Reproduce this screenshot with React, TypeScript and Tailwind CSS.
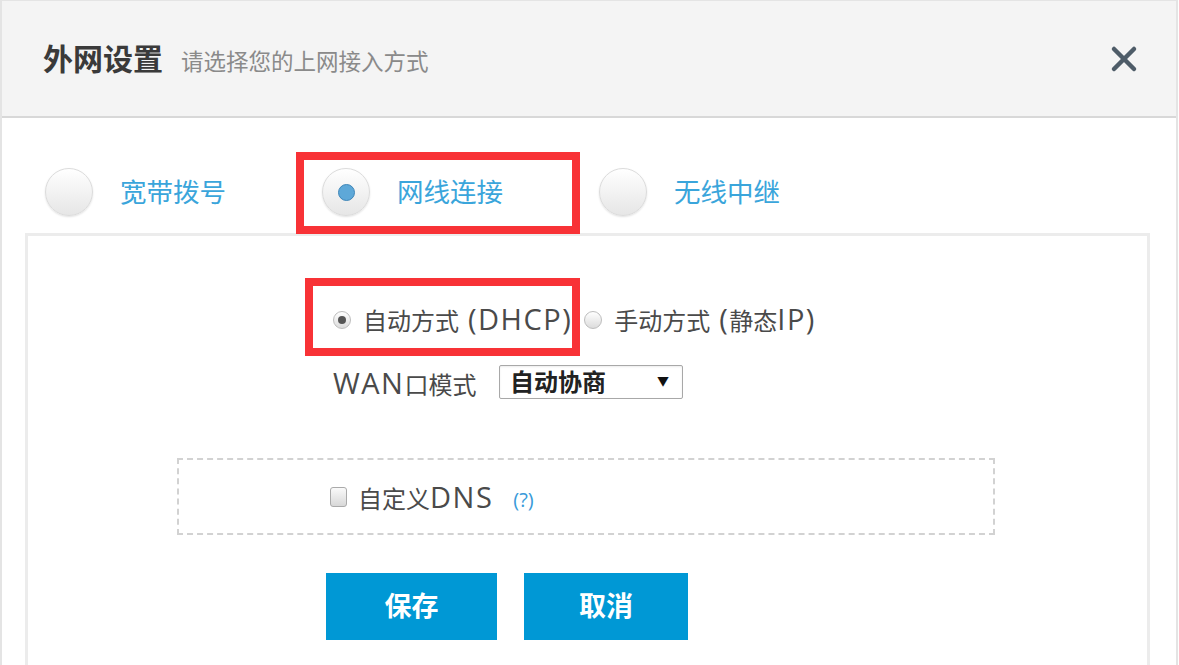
import React from "react";

function BigRadio({ checked }: { checked?: boolean }) {
  return (
    <div className="w-[48px] h-[48px] rounded-full border border-[#dcdcdc] bg-gradient-to-b from-white to-[#e6e6e6] shadow-[0_1px_2px_rgba(0,0,0,0.12)] flex items-center justify-center shrink-0">
      {checked && (
        <div className="w-[17px] h-[17px] rounded-full bg-[#5ea8d8] border border-[#3f86b8]" />
      )}
    </div>
  );
}

function SmallRadio({ checked }: { checked?: boolean }) {
  return (
    <div className="w-[18px] h-[18px] rounded-full border border-[#bdbdbd] bg-gradient-to-b from-white to-[#dcdcdc] flex items-center justify-center shrink-0">
      {checked && <div className="w-[8px] h-[8px] rounded-full bg-[#555]" />}
    </div>
  );
}

function L({ children }: { children: React.ReactNode }) {
  return <span className="text-[29px] tracking-[1.5px]">{children}</span>;
}

function Sp() {
  return <span className="inline-block w-[9px]" />;
}

export default function App() {
  return (
    <div className="w-[1179px] h-[665px] overflow-hidden bg-white relative font-['Open_Sans','Noto_Sans_CJK_SC',sans-serif]">
      <div className="w-[1178px] h-[665px] border-l-2 border-r-2 border-t border-[#e4e4e4] flex flex-col">
        {/* Header */}
        <div className="h-[117px] shrink-0 bg-[#f4f4f4] border-b-2 border-[#d8d8d8] flex items-center pl-[41px] pr-[38px]">
          <div className="flex items-baseline">
            <span className="text-[30px] font-bold text-[#3a3a3a] leading-none">外网设置</span>
            <span className="ml-[18px] text-[22.5px] text-[#8a8a8a] leading-none">请选择您的上网接入方式</span>
          </div>
          <div className="ml-auto">
            <svg width="28" height="28" viewBox="0 0 28 28">
              <line x1="4" y1="4" x2="24" y2="24" stroke="#4e5c68" strokeWidth="4.5" strokeLinecap="round" />
              <line x1="24" y1="4" x2="4" y2="24" stroke="#4e5c68" strokeWidth="4.5" strokeLinecap="round" />
            </svg>
          </div>
        </div>

        {/* Tabs */}
        <div className="flex items-center pl-[43px] pt-[50px] pb-[17px] shrink-0">
          <div className="flex items-center mr-[96px]">
            <BigRadio />
            <span className="ml-[27px] text-[26.5px] text-[#3aa5db] leading-none">宽带拨号</span>
          </div>
          <div className="flex items-center mr-[96px]">
            <BigRadio checked />
            <span className="ml-[27px] text-[26.5px] text-[#3aa5db] leading-none">网线连接</span>
          </div>
          <div className="flex items-center">
            <BigRadio />
            <span className="ml-[27px] text-[26.5px] text-[#3aa5db] leading-none">无线中继</span>
          </div>
        </div>

        {/* Panel */}
        <div className="ml-[23px] w-[1125px] flex-1 border-[3px] border-b-0 border-[#ececec] flex flex-col">
          <div className="flex items-center pl-[305px] pt-[66px] h-[101px] text-[24px] text-[#4a4a4a]">
            <SmallRadio checked />
            <span className="ml-[12px] leading-[33px] whitespace-nowrap">
              自动方式<Sp /><L>(DHCP)</L>
            </span>
            <div className="ml-[12px]">
              <SmallRadio />
            </div>
            <span className="ml-[12px] leading-[33px] whitespace-nowrap">
              手动方式<Sp /><L>(</L>静态<L>IP)</L>
            </span>
          </div>

          <div className="flex items-center pl-[305px] mt-[28px]">
            <span className="w-[166px] text-[24px] text-[#4a4a4a] leading-none whitespace-nowrap">
              <L>WAN</L>口模式
            </span>
            <div className="w-[184px] h-[34px] border border-[#a8a8a8] rounded-[2px] bg-white flex items-center pl-[10px] pr-[13px] shadow-[inset_0_1px_2px_rgba(0,0,0,0.08)]">
              <span className="text-[24px] font-bold text-[#222] leading-none">自动协商</span>
              <span className="ml-auto text-[12px] text-[#111] leading-none">▼</span>
            </div>
          </div>

          <div className="ml-[149px] mt-[59px] w-[818px] h-[77px] border-2 border-dashed border-[#d2d2d2] flex items-center pl-[151px]">
            <div className="w-[17px] h-[20px] rounded-[3px] border border-[#aaa] bg-gradient-to-b from-[#fafafa] to-[#d8d8d8]" />
            <span className="ml-[11px] text-[24px] text-[#4a4a4a] leading-none whitespace-nowrap">
              自定义<L>DNS</L>
            </span>
            <span className="ml-[20px] mt-[6px] text-[20px] text-[#3a9ad9] leading-none">(?)</span>
          </div>

          <div className="flex ml-[298px] mt-[38px] gap-[27px]">
            <div className="w-[171px] h-[67px] bg-[#0098d5] flex items-center justify-center text-white text-[27px] font-bold">保存</div>
            <div className="w-[164px] h-[67px] bg-[#0098d5] flex items-center justify-center text-white text-[27px] font-bold">取消</div>
          </div>
        </div>
      </div>

      {/* Annotation highlight boxes */}
      <div className="absolute left-[296px] top-[152px] w-[284px] h-[82px] border-[8px] border-[#f83236]" />
      <div className="absolute left-[305px] top-[278px] w-[275px] h-[78px] border-[8px] border-[#f83236]" />
    </div>
  );
}
